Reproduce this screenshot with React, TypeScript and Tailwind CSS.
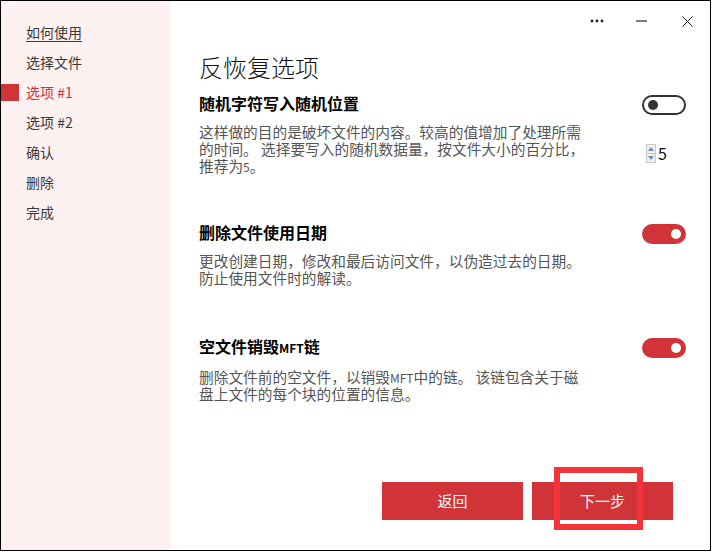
import React from 'react';

const navItems = ['如何使用', '选择文件', '选项 #1', '选项 #2', '确认', '删除', '完成'];

const font = "font-['Noto_Sans_CJK_SC','Noto_Sans',sans-serif]";

const Toggle: React.FC<{ on: boolean }> = ({ on }) =>
    on ? (
        <div className="w-[44px] h-[20px] rounded-full bg-[#d13438] flex items-center justify-end pr-[5px]">
            <div className="w-[10px] h-[10px] rounded-full bg-white" />
        </div>
    ) : (
        <div className="w-[44px] h-[20px] rounded-full border-2 border-[#333] flex items-center pl-[4px]">
            <div className="w-[10px] h-[10px] rounded-full bg-[#333]" />
        </div>
    );

const Spinner: React.FC = () => (
    <div className="flex items-center ml-[4px]">
        <div className="flex flex-col w-[10px] h-[19px] border border-[#c8c8c8] bg-[#f0f0f0]">
            <div className="flex-1 flex items-center justify-center border-b border-[#c8c8c8]">
                <svg width="6" height="4" viewBox="0 0 6 4"><path d="M0 4 3 0 6 4z" fill="#6b8fb5" /></svg>
            </div>
            <div className="flex-1 flex items-center justify-center">
                <svg width="6" height="4" viewBox="0 0 6 4"><path d="M0 0 3 4 6 0z" fill="#6b8fb5" /></svg>
            </div>
        </div>
        <span className="ml-[2px] text-[16px] leading-[20px] text-[#111]">5</span>
    </div>
);

// small latin runs inside CJK text (5, MFT)
const Small: React.FC<{ children: React.ReactNode }> = ({ children }) => (
    <span className="text-[12px] leading-none">{children}</span>
);

interface SectionProps {
    title: React.ReactNode;
    lines: React.ReactNode[];
    on: boolean;
    spinner?: boolean;
    className: string;
    descClass: string;
}

const Section: React.FC<SectionProps> = ({ title, lines, on, spinner, className, descClass }) => (
    <div className={className}>
        <div className="flex items-start justify-between h-[20px]">
            <div className="text-[16px] leading-[20px] font-bold text-black">{title}</div>
            <div className="mt-[2px]"><Toggle on={on} /></div>
        </div>
        <div className={`flex items-center justify-between ${descClass}`}>
            <div className="text-[14.7px] leading-[17px] text-[#555]">
                {lines.map((l, i) => (
                    <div key={i} className="h-[17px] whitespace-nowrap">{l}</div>
                ))}
            </div>
            {spinner && (
                <div className="w-[44px] mt-[9px]"><Spinner /></div>
            )}
        </div>
    </div>
);

export default function App() {
    return (
        <div className={`relative w-[711px] h-[551px] border border-black bg-white flex ${font}`}>
            <div className="w-[170px] bg-[#fdf1f1] pt-[16px]">
                {navItems.map((item, i) => (
                    <div key={item} className="h-[30px] flex items-center">
                        <div className={`w-[18px] h-[17px] ${i === 2 ? 'bg-[#d13438]' : ''}`} />
                        <span
                            className={`ml-[7px] text-[14px] ${i === 2 ? 'text-[#d13438]' : 'text-[#3a3a3a]'} ${i === 0 ? 'underline underline-offset-[3px]' : ''}`}
                        >
                            {item}
                        </span>
                    </div>
                ))}
            </div>

            <div className="flex-1 flex flex-col pl-[28px] pr-[24px]">
                <div className="h-[40px] flex items-center justify-end -mr-[7px]">
                    <svg width="14" height="4" viewBox="0 0 14 4">
                        <circle cx="2" cy="2" r="1.4" fill="#222" />
                        <circle cx="7" cy="2" r="1.4" fill="#222" />
                        <circle cx="12" cy="2" r="1.4" fill="#222" />
                    </svg>
                    <svg className="ml-[32px]" width="11" height="2" viewBox="0 0 11 2">
                        <path d="M0 1h11" stroke="#222" strokeWidth="1.2" />
                    </svg>
                    <svg className="ml-[35px]" width="11" height="11" viewBox="0 0 11 11">
                        <path d="M0.5 0.5 10.5 10.5M10.5 0.5 0.5 10.5" stroke="#222" strokeWidth="1" />
                    </svg>
                </div>

                <h1 className="mt-[10px] text-[24px] leading-[32px] font-light text-[#111]">反恢复选项</h1>

                <Section
                    className="mt-[10px]"
                    descClass="mt-[10px]"
                    on={false}
                    spinner
                    title="随机字符写入随机位置"
                    lines={[
                        '这样做的目的是破坏文件的内容。较高的值增加了处理所需',
                        '的时间。 选择要写入的随机数据量，按文件大小的百分比，',
                        <>推荐为<Small>5</Small>。</>,
                    ]}
                />
                <Section
                    className="mt-[48px]"
                    descClass="mt-[10px]"
                    on
                    title="删除文件使用日期"
                    lines={[
                        '更改创建日期，修改和最后访问文件，以伪造过去的日期。',
                        '防止使用文件时的解读。',
                    ]}
                />
                <Section
                    className="mt-[50px]"
                    descClass="mt-[12px]"
                    on
                    title={<>空文件销毁<Small>MFT</Small>链</>}
                    lines={[
                        <>删除文件前的空文件，以销毁<Small>MFT</Small>中的链。 该链包含关于磁</>,
                        '盘上文件的每个块的位置的信息。',
                    ]}
                />

                <div className="mt-auto mb-[30px] flex justify-end gap-[9px] pr-[13px]">
                    <button className="w-[141px] h-[38px] bg-[#d13438] text-white text-[15px]">返回</button>
                    <button className="w-[141px] h-[38px] bg-[#d13438] text-white text-[15px]">下一步</button>
                </div>
            </div>

            <div className="absolute left-[553px] top-[466px] w-[89px] h-[63px] border-[6px] border-[#f5333a]" />
        </div>
    );
}
